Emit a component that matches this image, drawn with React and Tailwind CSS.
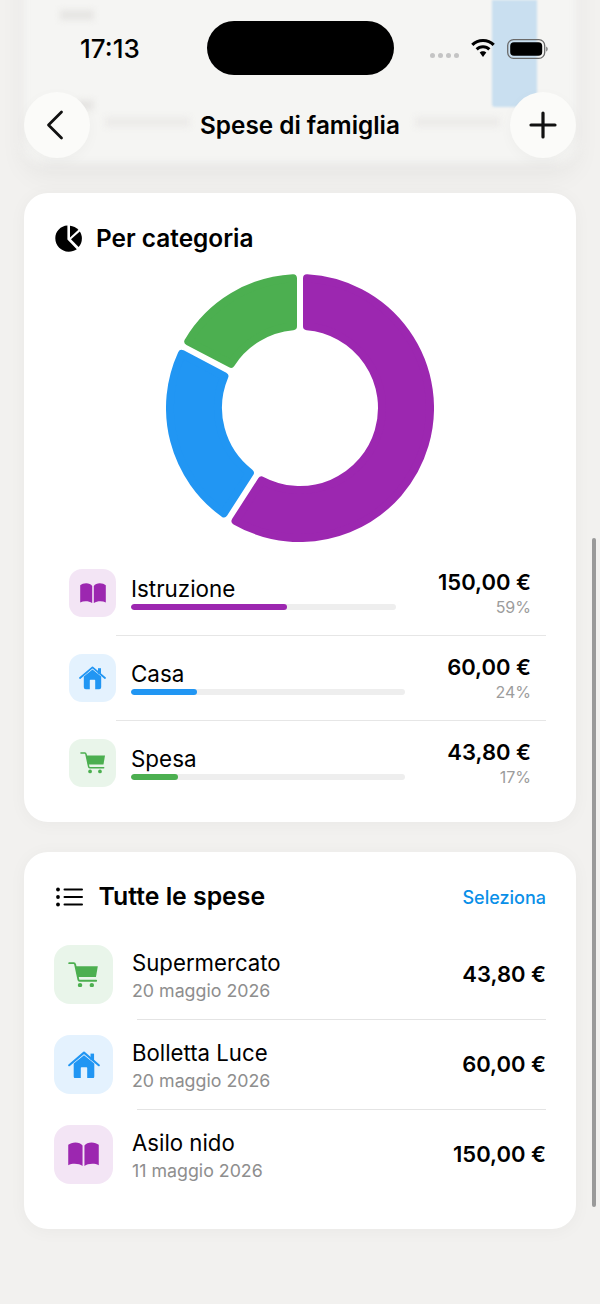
const FONT = "font-['Inter','Noto_Sans',sans-serif]";

const C = { purple: '#9c27b0', blue: '#2196f3', green: '#4caf50' };

function segPath(a0, a1, R, r, g, c) {
  const cx = 134, cy = 134;
  const Ro = R - c, Ri = r + c, off = g / 2 + c;
  const toRad = (d) => (d * Math.PI) / 180;
  const pt = (rad, deg) => {
    const t = toRad(deg);
    return `${(cx + rad * Math.sin(t)).toFixed(2)} ${(cy - rad * Math.cos(t)).toFixed(2)}`;
  };
  const dO = (Math.asin(off / Ro) * 180) / Math.PI;
  const dI = (Math.asin(off / Ri) * 180) / Math.PI;
  const s0 = a0 + dO, e0 = a1 - dO, s1 = a0 + dI, e1 = a1 - dI;
  const l0 = e0 - s0 > 180 ? 1 : 0;
  const l1 = e1 - s1 > 180 ? 1 : 0;
  return `M${pt(Ro, s0)} A${Ro} ${Ro} 0 ${l0} 1 ${pt(Ro, e0)} L${pt(Ri, e1)} A${Ri} ${Ri} 0 ${l1} 0 ${pt(Ri, s1)} Z`;
}

function Donut() {
  const segs = [
    [0, 212.8, C.purple],
    [212.8, 297.7, C.blue],
    [297.7, 360, C.green],
  ];
  return (
    <svg width="268" height="268" viewBox="0 0 268 268" className="block">
      {segs.map(([a, b, col]) => (
        <path key={col} d={segPath(a, b, 134, 78, 6, 4)} fill={col} stroke={col} strokeWidth="8" strokeLinejoin="round" />
      ))}
    </svg>
  );
}

function Book({ color, w }) {
  return (
    <svg width={w} height={w * 0.78} viewBox="0 0 26 20" fill={color}>
      <path d="M12.2 2.8C11 1.2 8.8.2 6.2.2 3.8.2 1.6 1 .2 2.2V19.4C1.8 18.6 3.6 18.2 5.6 18.2 8.2 18.2 10.6 18.8 12.2 20Z" />
      <path d="M13.8 2.8C15 1.2 17.2.2 19.8.2 22.2.2 24.4 1 25.8 2.2V19.4C24.2 18.6 22.4 18.2 20.4 18.2 17.8 18.2 15.4 18.8 13.8 20Z" />
    </svg>
  );
}

function House({ color, w }) {
  return (
    <svg width={w} height={w * 0.87} viewBox="0 0 27 23.5">
      <path d="M19 2.2h3v5.5h-3z" fill={color} />
      <path fillRule="evenodd" clipRule="evenodd" fill={color} d="M4.8 10.6 13.5 3.6 22.2 10.6V21.3a2 2 0 0 1-2 2H6.8a2 2 0 0 1-2-2ZM10.8 14.4V23.3H16.2V14.4a.6.6 0 0 0-.6-.6H11.4a.6.6 0 0 0-.6.6Z" />
      <path d="M1 12 13.5 1.4 26 12" fill="none" stroke={color} strokeWidth="1.8" strokeLinecap="round" strokeLinejoin="round" />
    </svg>
  );
}

function Cart({ color, w }) {
  return (
    <svg width={w} height={w * 0.82} viewBox="0 0 26 22" fill={color}>
      <path d="M6.2 3.6H25.4L23.8 13H7.8Z" />
      <path d="M.6 1H4.6C5.2 1 5.6 1.4 5.7 2L8.6 15.4C8.7 16 9.1 16.2 9.6 16.2H24" fill="none" stroke={color} strokeWidth="1.6" strokeLinecap="round" strokeLinejoin="round" />
      <circle cx="10" cy="20" r="1.9" />
      <circle cx="20.2" cy="20" r="1.9" />
    </svg>
  );
}

function PieIcon() {
  return (
    <svg width="27" height="27" viewBox="0 0 27 27">
      <path d="M12.4.6V14.6L21.8 24.2C19.5 25.8 16.7 26.7 13.7 26.7 6.3 26.7.3 20.7.3 13.3.3 6.4 5.7.9 12.4.6Z" fill="#000" />
      <path d="M15 .7C18.3 1 21.2 2.5 23.4 4.8L15 12.6Z" fill="#000" />
      <path d="M24.8 6.4C26.1 8.4 26.9 10.8 26.9 13.4 26.9 16.7 25.7 19.7 23.6 22L16 14.2Z" fill="#000" />
    </svg>
  );
}

function ListIcon() {
  return (
    <svg width="27" height="20" viewBox="0 0 27 20" fill="#000">
      <circle cx="2" cy="2.5" r="1.9" />
      <circle cx="2" cy="10" r="1.9" />
      <circle cx="2" cy="17.5" r="1.9" />
      <rect x="7.5" y="1.5" width="19.5" height="2" rx="1" />
      <rect x="7.5" y="9" width="19.5" height="2" rx="1" />
      <rect x="7.5" y="16.5" width="19.5" height="2" rx="1" />
    </svg>
  );
}

function Wifi() {
  return (
    <svg width="26" height="19" viewBox="0 0 24 19" fill="#000">
      <path d="M12 0C7.4 0 3.3 1.8.2 4.7L2.4 7C4.9 4.6 8.3 3.1 12 3.1S19.1 4.6 21.6 7L23.8 4.7C20.7 1.8 16.6 0 12 0Z" />
      <path d="M12 6.2C9.1 6.2 6.5 7.3 4.6 9.2L6.8 11.4C8.2 10.1 10 9.3 12 9.3S15.8 10.1 17.2 11.4L19.4 9.2C17.5 7.3 14.9 6.2 12 6.2Z" />
      <path d="M12 12.3C10.7 12.3 9.6 12.8 8.7 13.6L12 18 15.3 13.6C14.4 12.8 13.3 12.3 12 12.3Z" />
    </svg>
  );
}

function Battery() {
  return (
    <svg width="41" height="20" viewBox="0 0 41 20">
      <rect x=".7" y=".7" width="37" height="18.6" rx="5.8" fill="none" stroke="#6a6a6a" strokeWidth="1.3" />
      <rect x="3.2" y="3.2" width="32" height="13.6" rx="3.8" fill="#000" />
      <path d="M39.2 7.4v5.2c.9-.4 1.5-1.4 1.5-2.6s-.6-2.2-1.5-2.6Z" fill="#777" />
    </svg>
  );
}

function CatRow({ icon, name, pct, amount, percent, color }) {
  return (
    <div className="h-[48px] flex items-start">
      <div className="w-[47px] h-[48px] rounded-[13px] flex items-center justify-center shrink-0" style={{ backgroundColor: color + '1f' }}>
        {icon}
      </div>
      <div className="flex-1 min-w-0 ml-[15px] mr-[42px] pt-[7px] flex flex-col">
        <div className="text-[22.4px] leading-[26px] text-black">{name}</div>
        <div className="h-[6px] mt-[2px] rounded-full bg-[#eeeeee] overflow-hidden">
          <div className="h-full rounded-full" style={{ width: pct, backgroundColor: color }} />
        </div>
      </div>
      <div className="flex flex-col items-end">
        <div className="text-[22px] leading-[26px] font-semibold text-black">{amount}</div>
        <div className="text-[16px] leading-[20px] mt-[2px] text-[#9c9c9c]">{percent}</div>
      </div>
    </div>
  );
}

function ExpRow({ icon, name, date, amount, color }) {
  return (
    <div className="h-[59px] flex items-center">
      <div className="w-[59px] h-[59px] rounded-[16px] flex items-center justify-center shrink-0" style={{ backgroundColor: color + '1f' }}>
        {icon}
      </div>
      <div className="flex-1 ml-[19px] flex flex-col pt-[3px]">
        <div className="text-[22.2px] leading-[28px] text-black">{name}</div>
        <div className="text-[17.8px] leading-[27px] text-[#8e8e8e]">{date}</div>
      </div>
      <div className="text-[22px] font-semibold text-black">{amount}</div>
    </div>
  );
}

export default function App() {
  return (
    <div className={`${FONT} relative w-[600px] h-[1304px] overflow-hidden bg-[#f2f1ef] antialiased`}>
      {/* Content scrolled under the top bar, frosted */}
      <header className="relative h-[163px]">
        <div className="absolute left-[24px] right-[24px] top-[-40px] h-[203px] rounded-b-[20px] bg-[#f5f5f3] shadow-[0_12px_26px_rgba(0,0,0,0.05)] blur-[5px]" />
        <div className="absolute left-[492px] top-0 w-[45px] h-[107px] bg-[#c9dff0] rounded-b-[3px] blur-[1px]" />
        <div className="absolute left-[60px] top-[10px] w-[34px] h-[10px] bg-[#e6e5e3] blur-[3px]" />
        <div className="absolute left-[78px] top-[100px] w-[16px] h-[10px] bg-[#e6e5e3] blur-[3px]" />
        <div className="absolute left-[105px] top-[117px] w-[85px] h-[10px] bg-[#ecebe9] blur-[3px]" />
        <div className="absolute left-[415px] top-[117px] w-[85px] h-[10px] bg-[#ecebe9] blur-[3px]" />

        <div className="relative flex items-center h-[92px] pl-[80px] pr-[52px] pt-[4px]">
          <span className="text-[26px] font-medium text-black w-[127px]">17:13</span>
          <div className="w-[187px] h-[54px] rounded-full bg-black mt-[-1px]" />
          <div className="flex-1 flex items-center justify-end gap-[11px] pt-[1px]">
            <div className="flex gap-[3px] mt-[14px]">
              <span className="w-[5px] h-[5px] rounded-full bg-[#c4c4c4]" />
              <span className="w-[5px] h-[5px] rounded-full bg-[#c4c4c4]" />
              <span className="w-[5px] h-[5px] rounded-full bg-[#c4c4c4]" />
              <span className="w-[5px] h-[5px] rounded-full bg-[#c4c4c4]" />
            </div>
            <Wifi />
            <Battery />
          </div>
        </div>
        <div className="relative flex items-center justify-between px-[24px] h-[66px]">
          <button className="w-[66px] h-[66px] rounded-full bg-[#fbfbf9] shadow-[0_4px_14px_rgba(0,0,0,0.03)] flex items-center justify-center">
            <svg className="mr-[4px]" width="20" height="30" viewBox="0 0 20 30" fill="none" stroke="#111" strokeWidth="2.8" strokeLinecap="round" strokeLinejoin="round"><path d="M16.5 2 3.5 15l13 13" /></svg>
          </button>
          <h1 className="text-[24.3px] font-semibold text-black">Spese di famiglia</h1>
          <button className="w-[66px] h-[66px] rounded-full bg-[#fbfbf9] shadow-[0_4px_14px_rgba(0,0,0,0.03)] flex items-center justify-center">
            <svg width="28" height="28" viewBox="0 0 28 28" fill="none" stroke="#111" strokeWidth="3.2" strokeLinecap="round"><path d="M14 2v24M2 14h24" /></svg>
          </button>
        </div>
      </header>

      <main className="relative px-[24px] pt-[30px] flex flex-col gap-[30px]">
        {/* Per categoria */}
        <section className="h-[629px] rounded-[24px] bg-white shadow-[0_2px_18px_rgba(0,0,0,0.04)] pt-[31px]">
          <div className="flex items-center pl-[31px] h-[28px] gap-[14px]">
            <PieIcon />
            <h2 className="text-[24.4px] font-semibold text-black">Per categoria</h2>
          </div>
          <div className="flex justify-center mt-[22px]"><Donut /></div>
          <div className="mt-[27px] pl-[45px] pr-[30px]">
            <div className="pr-[15px]">
              <CatRow color={C.purple} icon={<Book color={C.purple} w={26} />} name="Istruzione" pct="59%" amount="150,00 €" percent="59%" />
            </div>
            <div className="h-px bg-[#e6e6e6] ml-[47px] my-[18px]" />
            <div className="pr-[15px]">
              <CatRow color={C.blue} icon={<House color={C.blue} w={27} />} name="Casa" pct="24%" amount="60,00 €" percent="24%" />
            </div>
            <div className="h-px bg-[#e6e6e6] ml-[47px] my-[18px]" />
            <div className="pr-[15px]">
              <CatRow color={C.green} icon={<Cart color={C.green} w={26} />} name="Spesa" pct="17%" amount="43,80 €" percent="17%" />
            </div>
          </div>
        </section>

        {/* Tutte le spese */}
        <section className="h-[377px] rounded-[24px] bg-white shadow-[0_2px_18px_rgba(0,0,0,0.04)] pt-[31px] px-[30px]">
          <div className="flex items-center h-[28px]">
            <div className="ml-[2px]"><ListIcon /></div>
            <h2 className="ml-[15.500px] flex-1 text-[24.8px] font-semibold text-black">Tutte le spese</h2>
            <span className="text-[18px] font-medium text-[#0a8fe8]">Seleziona</span>
          </div>
          <div className="mt-[34px]">
            <ExpRow color={C.green} icon={<Cart color={C.green} w={31} />} name="Supermercato" date="20 maggio 2026" amount="43,80 €" />
            <div className="h-px bg-[#e4e4e4] ml-[83px] mt-[15px] mb-[15px]" />
            <ExpRow color={C.blue} icon={<House color={C.blue} w={32} />} name="Bolletta Luce" date="20 maggio 2026" amount="60,00 €" />
            <div className="h-px bg-[#e4e4e4] ml-[83px] mt-[15px] mb-[15px]" />
            <ExpRow color={C.purple} icon={<Book color={C.purple} w={31} />} name="Asilo nido" date="11 maggio 2026" amount="150,00 €" />
          </div>
        </section>
      </main>

      {/* Scroll indicator */}
      <div className="absolute left-[592px] top-[538px] w-[4px] h-[669px] rounded-full bg-[#9a9a9a]" />
    </div>
  );
}
